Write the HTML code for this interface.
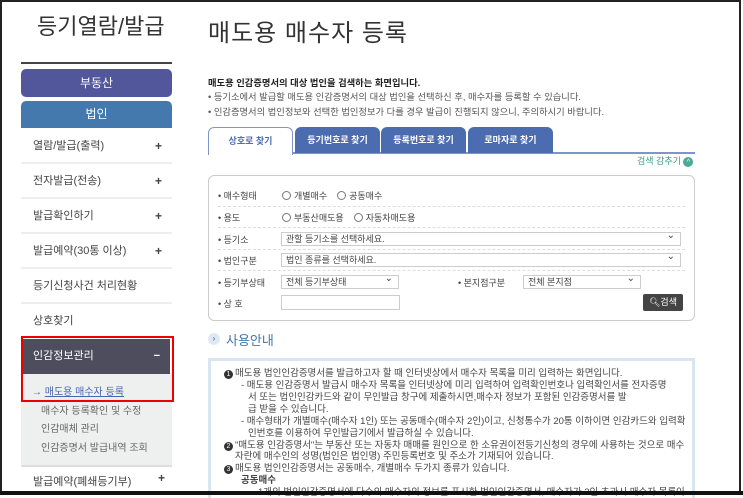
<!DOCTYPE html>
<html><head><meta charset="utf-8"><style>
*{margin:0;padding:0;box-sizing:border-box}
body{width:743px;height:495px;overflow:hidden;background:#fff;font-family:"Liberation Sans","Noto Sans CJK KR",sans-serif;color:#333;position:relative}
.a{position:absolute;white-space:nowrap}
.frame{position:absolute;left:0;top:0;width:741px;height:494px;border:2px solid #222;border-bottom:3px solid #111}
.mi{position:absolute;left:21px;width:151px;height:35px;border-bottom:2px solid #eee;font-size:11px;color:#444;padding-left:12px;line-height:34px}
.mi b{position:absolute;right:10px;top:0;font-weight:bold;font-size:12px}
.tab{position:absolute;top:127px;height:26px;width:85px;border-radius:6px 6px 0 0;background:#4c6cb0;color:#fff;font-size:9px;font-weight:bold;text-align:center;line-height:26px}
.lbl{position:absolute;left:218px;font-size:9px;color:#444}
.sel{position:absolute;height:14px;border:1px solid #ccc;font-size:9px;color:#444;padding-left:4px;line-height:12px}
.sel:after{content:"⌄";position:absolute;right:5px;top:-3px;font-size:10px}
.dash{position:absolute;left:218px;width:467px;border-top:1px dashed #ddd}
.rd{display:inline-block;width:9px;height:9px;border:1px solid #777;border-radius:50%;vertical-align:-1px;margin-right:3px}
.t{position:absolute;font-size:9.5px;color:#444;white-space:nowrap}
.n{display:inline-block;width:9px;height:9px;border-radius:50%;background:#333;color:#fff;font-size:7px;text-align:center;line-height:9px;margin-right:2px;vertical-align:0}
</style></head><body>
<div class="frame"></div>
<div class="a" style="left:37px;top:9px;font-size:22px;color:#333">등기열람/발급</div>
<div class="a" style="left:21px;top:62px;width:151px;height:2px;background:#444"></div>
<div class="a" style="left:21px;top:69px;width:151px;height:28px;background:#52579b;border-radius:5px;color:#fff;font-size:12px;text-align:center;line-height:28px">부동산</div>
<div class="a" style="left:21px;top:101px;width:151px;height:27px;background:#4479ad;border-radius:5px 5px 0 0;color:#fff;font-size:12px;text-align:center;line-height:27px">법인</div>
<div class="mi" style="top:129px">열람/발급(출력)<b>+</b></div>
<div class="mi" style="top:164px">전자발급(전송)<b>+</b></div>
<div class="mi" style="top:199px">발급확인하기<b>+</b></div>
<div class="mi" style="top:234px">발급예약(30통 이상)<b>+</b></div>
<div class="mi" style="top:269px">등기신청사건 처리현황</div>
<div class="mi" style="top:304px;border:none">상호찾기</div>
<div class="a" style="left:21px;top:373px;width:151px;height:92px;background:#eef0f0"></div>
<div class="a" style="left:23px;top:339px;width:147px;height:35px;background:#4e4d5d;color:#fff;font-size:11px;padding-left:10px;line-height:34px">인감정보관리<b style="position:absolute;right:10px">−</b></div>
<div class="a" style="left:21px;top:336px;width:153px;height:66px;border:2px solid #e00"></div>
<div class="a" style="left:32px;top:383px;font-size:10px;color:#4a64b0"><span>→</span> <u>매도용 매수자 등록</u></div>
<div class="a" style="left:41px;top:402px;font-size:10px;color:#666">매수자 등록확인 및 수정</div>
<div class="a" style="left:41px;top:420px;font-size:10px;color:#666">인감매체 관리</div>
<div class="a" style="left:41px;top:439px;font-size:10px;color:#666">인감증명서 발급내역 조회</div>
<div class="a" style="left:21px;top:465px;width:151px;height:2px;background:#ddd"></div>
<div class="a" style="left:33px;top:473px;font-size:11px;color:#444">발급예약(폐쇄등기부)</div>
<div class="a" style="left:158px;top:471px;font-size:12px;font-weight:bold;color:#444">+</div>

<div class="a" style="left:208px;top:13px;font-size:24px;color:#333;letter-spacing:1px">매도용 매수자 등록</div>
<div class="t" style="left:208px;top:75px;font-weight:bold;color:#222;font-size:9.3px">매도용 인감증명서의 대상 법인을 검색하는 화면입니다.</div>
<div class="t" style="left:208px;top:89px;color:#555;font-size:9.3px">• 등기소에서 발급할 매도용 인감증명서의 대상 법인을 선택하신 후, 매수자를 등록할 수 있습니다.</div>
<div class="t" style="left:208px;top:104px;color:#555;font-size:9.3px">• 인감증명서의 법인정보와 선택한 법인정보가 다를 경우 발급이 진행되지 않으니, 주의하시기 바랍니다.</div>
<div class="a" style="left:208px;top:152px;width:487px;height:2px;background:#7d94cc"></div>
<div class="tab" style="left:208px;background:#fff;border:1px solid #7d94cc;border-bottom:none;color:#4c6cb0;height:28px">상호로 찾기</div>
<div class="tab" style="left:295px">등기번호로 찾기</div>
<div class="tab" style="left:381px">등록번호로 찾기</div>
<div class="tab" style="left:468px">로마자로 찾기</div>
<div class="a" style="left:637px;top:156px;font-size:9px;color:#3a9a8a;line-height:11px">검색 감추기 <span style="display:inline-block;width:10px;height:10px;border-radius:50%;background:#4aab9a;color:#fff;font-size:7px;text-align:center;line-height:11px;vertical-align:middle">^</span></div>
<div class="a" style="left:208px;top:175px;width:487px;height:146px;border:1px solid #ccc;border-radius:6px"></div>
<div class="lbl" style="top:189px">• 매수형태</div>
<div class="a" style="left:282px;top:189px;font-size:9px;color:#444"><span class="rd"></span>개별매수 &nbsp;&nbsp;&nbsp;<span class="rd"></span>공동매수</div>
<div class="dash" style="top:206px"></div>
<div class="lbl" style="top:211px">• 용도</div>
<div class="a" style="left:282px;top:211px;font-size:9px;color:#444"><span class="rd"></span>부동산매도용 &nbsp;&nbsp;&nbsp;<span class="rd"></span>자동차매도용</div>
<div class="dash" style="top:227px"></div>
<div class="lbl" style="top:233px">• 등기소</div>
<div class="sel" style="left:281px;top:232px;width:400px">관할 등기소를 선택하세요.</div>
<div class="dash" style="top:249px"></div>
<div class="lbl" style="top:254px">• 법인구분</div>
<div class="sel" style="left:281px;top:253px;width:400px">법인 종류를 선택하세요.</div>
<div class="dash" style="top:270px"></div>
<div class="lbl" style="top:276px">• 등기부상태</div>
<div class="sel" style="left:281px;top:275px;width:118px">전체 등기부상태</div>
<div class="lbl" style="left:458px;top:276px">• 본지점구분</div>
<div class="sel" style="left:523px;top:275px;width:118px">전체 본지점</div>
<div class="lbl" style="top:297px">• 상 호</div>
<div class="a" style="left:281px;top:295px;width:119px;height:15px;border:1px solid #ccc"></div>
<div class="a" style="left:643px;top:294px;width:40px;height:17px;background:#444;border-radius:2px;color:#fff;font-size:9px;text-align:center;line-height:17px">🔍︎검색</div>

<div class="a" style="left:208px;top:333px;width:12px;height:12px;border-radius:50%;background:#dfe9f3;color:#4a7fb0;font-size:8px;text-align:center;line-height:12px;font-weight:bold">›</div>
<div class="a" style="left:226px;top:330px;font-size:13px;color:#3f78ad">사용안내</div>
<div class="a" style="left:208px;top:358px;width:487px;height:140px;border:3px solid #d8e6f2;border-bottom:none"></div>
<div class="t" style="left:224px;top:365px"><span class="n">1</span>매도용 법인인감증명서를 발급하고자 할 때 인터넷상에서 매수자 목록을 미리 입력하는 화면입니다.</div>
<div class="t" style="left:241px;top:377px">- 매도용 인감증명서 발급시 매수자 목록을 인터넷상에 미리 입력하여 입력확인번호나 입력확인서를 전자증명</div>
<div class="t" style="left:248px;top:389px">서 또는 법인인감카드와 같이 무인발급 창구에 제출하시면,매수자 정보가 포함된 인감증명서를 발</div>
<div class="t" style="left:248px;top:401px">급 받을 수 있습니다.</div>
<div class="t" style="left:241px;top:413px">- 매수형태가 개별매수(매수자 1인) 또는 공동매수(매수자 2인)이고, 신청통수가 20통 이하이면 인감카드와 입력확</div>
<div class="t" style="left:248px;top:425px">인번호를 이용하여 무인발급기에서 발급하실 수 있습니다.</div>
<div class="t" style="left:224px;top:437px"><span class="n">2</span>"매도용 인감증명서"는 부동산 또는 자동차 매매를 원인으로 한 소유권이전등기신청의 경우에 사용하는 것으로 매수</div>
<div class="t" style="left:235px;top:448px">자란에 매수인의 성명(법인은 법인명) 주민등록번호 및 주소가 기재되어 있습니다.</div>
<div class="t" style="left:224px;top:460px"><span class="n">3</span>매도용 법인인감증명서는 공동매수, 개별매수 두가지 종류가 있습니다.</div>
<div class="t" style="left:241px;top:472px;font-weight:bold">공동매수</div>
<div class="t" style="left:258px;top:484px">1개의 법인인감증명서에 다수의 매수자의 정보를 표시한 법인인감증명서, 매수자가 2인 초과시 매수자 목록이</div>
<div class="a" style="left:0;top:491px;width:743px;height:4px;background:#111"></div>
</body></html>
